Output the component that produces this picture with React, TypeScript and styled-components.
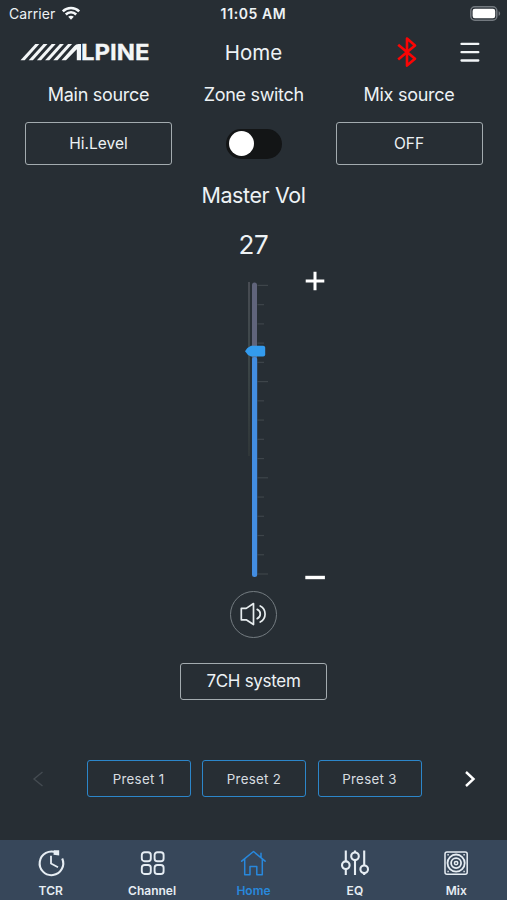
import React, { useState } from "react";
import styled, { createGlobalStyle } from "styled-components";

const GlobalStyle = createGlobalStyle`
  * { box-sizing: border-box; }
  body { margin: 0; background: #272e34; }
  button { appearance: none; margin: 0; padding: 0; background: none; border: 0; font: inherit; color: inherit; }
  svg { display: block; }
`;

const Screen = styled.main`
  display: flex;
  flex-direction: column;
  width: 507px;
  height: 900px;
  overflow: hidden;
  background: #272e34;
  color: #edf2f5;
  font-family: Inter, "Liberation Sans", sans-serif;
`;

const Bar = styled.div<{ $height: number }>`
  display: grid;
  grid-template-columns: 1fr auto 1fr;
  align-items: center;
  height: ${(p) => p.$height}px;
  flex: none;
`;

const Group = styled.div<{ $gap: number; $left?: number; $right?: number; $end?: boolean }>`
  display: flex;
  align-items: center;
  justify-content: ${(p) => (p.$end ? "flex-end" : "flex-start")};
  gap: ${(p) => p.$gap}px;
  padding-left: ${(p) => p.$left ?? 0}px;
  padding-right: ${(p) => p.$right ?? 0}px;
`;

const Text = styled.span<{ $size: number; $track?: number; $weight?: number }>`
  font-size: ${(p) => p.$size}px;
  font-weight: ${(p) => p.$weight ?? 400};
  letter-spacing: ${(p) => p.$track ?? 0}px;
  line-height: 1.2;
  white-space: nowrap;
`;

const Title = styled(Text)`
  padding: 2px 0 0 0;
`;

const Sources = styled.section`
  display: grid;
  grid-template-columns: 147px 1fr 147px;
  grid-template-rows: 38px 43px;
  row-gap: 8px;
  place-items: center;
  padding: 0 24.5px 0 25px;
  flex: none;
`;

const Outlined = styled.button<{ $w: number; $h: number; $size: number; $track?: number; $accent?: boolean }>`
  width: ${(p) => p.$w}px;
  height: ${(p) => p.$h}px;
  border: 1px solid ${(p) => (p.$accent ? "#2c86ca" : "#a3abaf")};
  border-radius: 3px;
  font-size: ${(p) => p.$size}px;
  letter-spacing: ${(p) => p.$track ?? 0}px;
  color: ${(p) => (p.$accent ? "#d8dde0" : "#edf2f5")};
  white-space: nowrap;
`;

const Switch = styled.button<{ $on: boolean }>`
  display: flex;
  align-items: center;
  justify-content: ${(p) => (p.$on ? "flex-end" : "flex-start")};
  width: 56px;
  height: 30px;
  padding: 0 2px 0 3px;
  border-radius: 15px;
  background: ${(p) => (p.$on ? "#2f8fe0" : "#131516")};
`;

const Knob = styled.span`
  width: 25px;
  height: 25px;
  border-radius: 50%;
  background: #fff;
`;

const Volume = styled.section`
  display: flex;
  flex-direction: column;
  align-items: center;
  height: 535px;
  padding-top: 18px;
  flex: none;
`;

const Level = styled.div`
  margin-top: 19px;
  height: 34px;
  display: flex;
  align-items: center;
`;

const Fader = styled.div`
  display: grid;
  grid-template-columns: 1fr 26px 1fr;
  width: 100%;
  height: 309px;
  margin-top: 9px;
`;

const FaderTrack = styled.div`
  grid-column: 2;
  padding: 10px 0 0 3px;
`;

const Steps = styled.div`
  display: flex;
  flex-direction: column;
  justify-content: space-between;
  align-items: flex-start;
  padding-left: 38px;
`;

const Mute = styled.button`
  display: grid;
  place-items: center;
  width: 47px;
  height: 47px;
  margin-top: 11px;
  border: 1px solid #747c81;
  border-radius: 50%;
  flex: none;
`;

const System = styled.div`
  margin-top: 25px;
`;

const Presets = styled.section`
  display: flex;
  align-items: center;
  height: 37px;
  margin-top: 60px;
  flex: none;
`;

const PresetList = styled.div`
  display: flex;
  gap: 11.5px;
`;

const Arrow = styled.button<{ $w: number; $dim?: boolean }>`
  display: grid;
  place-items: center;
  width: ${(p) => p.$w}px;
  padding-left: ${(p) => (p.$dim ? 0 : 11)}px;
  padding-right: ${(p) => (p.$dim ? 11 : 0)}px;
  color: ${(p) => (p.$dim ? "#444b51" : "#fff")};
`;

const Tabs = styled.nav`
  display: grid;
  grid-template-columns: repeat(5, 1fr);
  height: 60px;
  margin-top: auto;
  background: #37475a;
`;

const Tab = styled.button<{ $active: boolean }>`
  display: flex;
  flex-direction: column;
  align-items: center;
  gap: 6px;
  padding-top: 8px;
  color: ${(p) => (p.$active ? "#2888dc" : "#e6edf3")};
`;

const Logo = () => (
  <svg width="138" height="36" viewBox="19 34 138 36" role="img" aria-label="Alpine">
    <g fill="#f3f6f7">
      {[20.5, 28.7, 36.9, 45.1, 53.3].map((x) => (
        <polygon key={x} points={`${x},60.3 ${x + 14.8},44 ${x + 18.8},44 ${x + 4.2},60.3`} />
      ))}
      <path d="M61.5 60.3L74.3 46Q76 44 78.500 44H81V60.3H76.8V49.2L66 60.3z" />
    </g>
    <text
      x="81"
      y="60.1"
      fill="#f3f6f7"
      stroke="#f3f6f7"
      strokeWidth=".3"
      fontFamily="Inter"
      fontWeight="700"
      fontSize="22"
      textLength="68.5"
      lengthAdjust="spacingAndGlyphs"
    >
      LPINE
    </text>
  </svg>
);

const Wifi = () => (
  <svg width="20" height="16" viewBox="0 0 20 16" fill="none" stroke="#f5f8fa" strokeWidth="2.5">
    <path d="M1.8 5.3C6.4 .8 13.6 .8 18.2 5.3" />
    <path d="M4.8 8.5c2.9-2.9 7.5-2.9 10.4 0" />
    <path d="M7.2 10.8c1.6-1.5 4-1.5 5.6 0L10 13.8z" fill="#f5f8fa" stroke="none" />
  </svg>
);

const Battery = () => (
  <svg width="31" height="17" viewBox="0 0 31 17">
    <rect x=".8" y=".8" width="26" height="13.4" rx="4" fill="none" stroke="#73797f" strokeWidth="1.5" />
    <rect x="2.6" y="2.7" width="22.6" height="9.6" rx="2.2" fill="#fff" />
    <path d="M28.6 5.2c2 .6 2 4 0 4.6z" fill="#73797f" />
  </svg>
);

const Bluetooth = () => (
  <svg width="20" height="32" viewBox="0 0 20 32" fill="none" stroke="#fa0505" strokeWidth="2.6" strokeLinejoin="round">
    <path d="M1.2 8.8 18 22.8 10 29.6V2.6l8 7L1.2 23.4" />
  </svg>
);

const Menu = () => (
  <svg width="20" height="20" viewBox="0 0 20 20" stroke="#f2f5f7" strokeWidth="2.3" strokeLinecap="round">
    <path d="M1.5 1.9h16.8M1.5 10.2h16.8M1.5 18.5h16.8" />
  </svg>
);

const Scale = () => (
  <svg width="26" height="298" viewBox="244 281 26 298">
    <defs>
      <linearGradient id="rail" x1="0" y1="0" x2="0" y2="1">
        <stop offset="0" stopColor="#484c53" />
        <stop offset=".4" stopColor="#3d4749" />
        <stop offset="1" stopColor="#303739" />
      </linearGradient>
    </defs>
    <rect x="248" y="282" width="2" height="174" fill="url(#rail)" />
    {Array.from({ length: 16 }, (_, i) => (
      <rect key={i} x="257.5" y={284.8 + i * 19.24} width={i % 5 === 0 ? 10.5 : 6.5} height="1.2" fill="#3e454a" />
    ))}
    <rect x="252" y="282.5" width="5" height="80" rx="2.5" fill="#60647b" />
    <rect x="252" y="357" width="5.2" height="220" rx="2.5" fill="#438de1" />
    <path d="M245 351.2q2.4-4 6-5.4h12.2q2 0 2 2v6.8q0 2-2 2H251q-3.6-1.4-6-5.4z" fill="#339bee" />
  </svg>
);

const Plus = () => (
  <svg width="20" height="20" viewBox="0 0 20 20" stroke="#fff" strokeWidth="3">
    <path d="M.7 10h18.6M10 .7v18.6" />
  </svg>
);

const Minus = () => (
  <svg width="20" height="5" viewBox="0 0 20 5">
    <rect x=".3" y=".8" width="19.6" height="3.4" fill="#fff" />
  </svg>
);

const Speaker = () => (
  <svg width="28" height="24" viewBox="0 0 28 24" fill="none" stroke="#e8edef" strokeWidth="1.7" strokeLinejoin="round" strokeLinecap="round">
    <path d="M1.3 6.4v11.4h4.9L13.5 22.5V1.5L6.2 6.4z" />
    <path d="M17.2 7.4c4.1 1.8 4.1 7.4 0 9.2M20.2 4c6.5 3.4 6.5 12.6 0 16" />
  </svg>
);

const Chevron = ({ left }: { left?: boolean }) => (
  <svg width="12" height="18" viewBox="0 0 12 18" fill="none" stroke="currentColor" strokeWidth={left ? 1.4 : 2.4}>
    <path d={left ? "M10.5 2 2 9l8.5 7" : "M2 2l7.5 7L2 16"} />
  </svg>
);

const icons: Record<string, React.ReactNode> = {
  TCR: (
    <>
      <path d="M20.5 4.700A11.800 11.800 0 1 0 26.200 10.500" strokeWidth="2.100" />
      <path d="M15 7.800v7.700l7 3.700" strokeWidth="1.800" />
      <path d="M17.800 2.200h5.400v5.200l-5.700-.6z" fill="currentColor" stroke="none" />
    </>
  ),
  Channel: (
    <>
      {[4.8, 17.6].map((x) =>
        [4.2, 17].map((y) => <rect key={`${x}-${y}`} x={x} y={y} width="9" height="9" rx="2.8" strokeWidth="1.9" />)
      )}
    </>
  ),
  Home: (
    <g strokeWidth="1.5" strokeLinejoin="round" strokeLinecap="round">
      <path d="M3.7 13.2 15.500 3.500l11.600 9.700M6.700 11v15.700h5.300v-8.200h6.800v8.200h5.500V11M23 9.500V5.200" />
    </g>
  ),
  EQ: (
    <g strokeWidth="2.1">
      <path d="M5.8 2.5v11M5.8 21v6M15 2.5v2M15 12v15M24.2 2.5v14.5M24.2 25v2" />
      <circle cx="5.8" cy="17.2" r="3.8" />
      <circle cx="15" cy="8.3" r="3.8" />
      <circle cx="24.2" cy="21.3" r="3.8" />
    </g>
  ),
  Mix: (
    <g strokeWidth="1.5">
      <rect x="4" y="4" width="22.2" height="22.2" rx="2" />
      <circle cx="15.1" cy="15.1" r="8.6" strokeWidth="1.8" />
      <circle cx="15.1" cy="15.1" r="5" strokeWidth="1.8" />
      <circle cx="15.1" cy="15.1" r="1.700" />
      <path d="M6.4 6.8h1.400M22.400 6.8h1.400M6.4 23.400h1.400M22.400 23.400h1.400" />
    </g>
  ),
};

export default function App() {
  const [zone, setZone] = useState(false);
  const [tab, setTab] = useState("Home");

  return (
    <>
      <GlobalStyle />
      <Screen>
        <Bar $height={28}>
          <Group $gap={6} $left={9}>
            <Text $size={14} $track={0.05}>Carrier</Text>
            <Wifi />
          </Group>
          <Text $size={14} $weight={600} $track={0.6}>11:05 AM</Text>
          <Group $gap={0} $right={6} $end>
            <Battery />
          </Group>
        </Bar>
        <Bar $height={48}>
          <Group $gap={0} $left={19}>
            <Logo />
          </Group>
          <Title $size={20.5}>Home</Title>
          <Group $gap={43} $right={27} $end>
            <Bluetooth />
            <Menu />
          </Group>
        </Bar>
        <Sources>
          <Text $size={18} $track={-0.3}>Main source</Text>
          <Text $size={18} $track={-0.3}>Zone switch</Text>
          <Text $size={18} $track={-0.25}>Mix source</Text>
          <Outlined $w={147} $h={43} $size={15.5}>Hi.Level</Outlined>
          <Switch $on={zone} onClick={() => setZone(!zone)} aria-label="Zone switch">
            <Knob />
          </Switch>
          <Outlined $w={147} $h={43} $size={15.5}>OFF</Outlined>
        </Sources>
        <Volume>
          <Text $size={21.5} $track={-0.4}>Master Vol</Text>
          <Level>
            <Text $size={26} $track={-0.4}>27</Text>
          </Level>
          <Fader>
            <FaderTrack>
              <Scale />
            </FaderTrack>
            <Steps>
              <button aria-label="Volume up"><Plus /></button>
              <button aria-label="Volume down"><Minus /></button>
            </Steps>
          </Fader>
          <Mute aria-label="Mute">
            <Speaker />
          </Mute>
          <System>
            <Outlined $w={147} $h={37} $size={17} $track={-0.3}>7CH system</Outlined>
          </System>
        </Volume>
        <Presets>
          <Arrow $w={86.5} $dim aria-label="Previous"><Chevron left /></Arrow>
          <PresetList>
            {["Preset 1", "Preset 2", "Preset 3"].map((name) => (
              <Outlined key={name} $w={104} $h={37} $size={13.3} $track={0.3} $accent>{name}</Outlined>
            ))}
          </PresetList>
          <Arrow $w={85.5} aria-label="Next"><Chevron /></Arrow>
        </Presets>
        <Tabs>
          {Object.keys(icons).map((name) => (
            <Tab key={name} $active={tab === name} onClick={() => setTab(name)}>
              <svg width="30" height="30" viewBox="0 0 30 30" fill="none" stroke="currentColor" strokeWidth="2">
                {icons[name]}
              </svg>
              <Text $size={12} $weight={600}>{name}</Text>
            </Tab>
          ))}
        </Tabs>
      </Screen>
    </>
  );
}
